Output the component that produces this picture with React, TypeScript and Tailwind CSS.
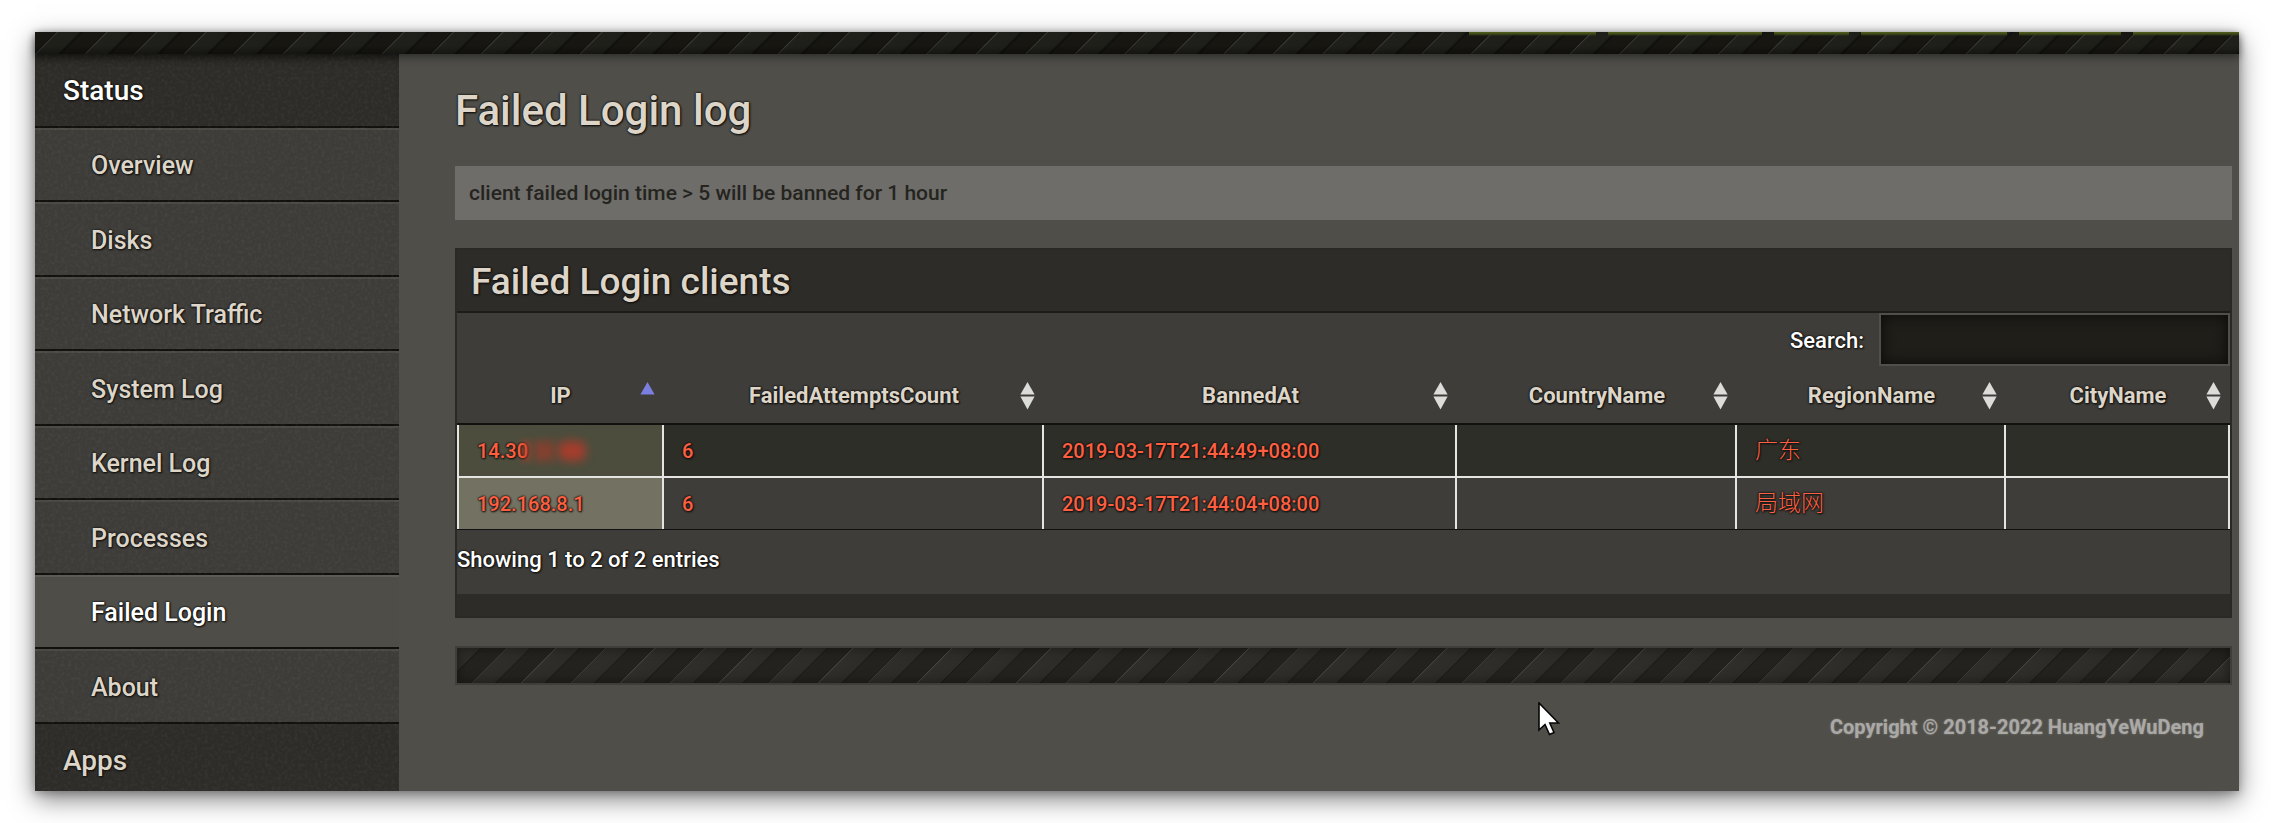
import { useState } from "react";

const overviewLinks = [
  "Overview",
  "Disks",
  "Network Traffic",
  "System Log",
  "Kernel Log",
  "Processes",
  "Failed Login",
  "About",
];

const columns = [
  { name: "IP", width: "w-[207px]" },
  { name: "FailedAttemptsCount", width: "w-[380px]" },
  { name: "BannedAt", width: "w-[413px]" },
  { name: "CountryName", width: "w-[280px]" },
  { name: "RegionName", width: "w-[269px]" },
  { name: "CityName", width: "w-[224px]" },
];

const clients = [
  { ip: "14.30", masked: true, count: 6, bannedAt: "2019-03-17T21:44:49+08:00", country: "", region: "广东", city: "" },
  { ip: "192.168.8.1", masked: false, count: 6, bannedAt: "2019-03-17T21:44:04+08:00", country: "", region: "局域网", city: "" },
];

const headerTabs = ["w-[127px]", "w-[154px]", "w-[75px]", "w-[146px]", "w-[102px]", "w-[106px]"];

const outline = "[text-shadow:0_0_2px_#12110f,0_0_2px_#12110f,1px_1px_2px_#12110f]";

function Grain() {
  return (
    <svg aria-hidden="true" className="pointer-events-none absolute inset-0 h-full w-full opacity-4">
      <filter id="grain">
        <feTurbulence type="fractalNoise" baseFrequency="0.3" numOctaves="3" seed="4" />
        <feColorMatrix type="matrix" values="0 0 0 0 1  0 0 0 0 1  0 0 0 0 0.95  2.4 0 0 0 -1" />
      </filter>
      <rect width="100%" height="100%" filter="url(#grain)" />
    </svg>
  );
}

function SortIcon({ active }: { active: boolean }) {
  return (
    <svg aria-hidden="true" width="15" height="28" viewBox="0 0 15 28">
      <path d="M7.5 0 L14.6 12.6 H0.4 Z" fill={active ? "#7b7fe0" : "#dcdcda"} />
      {!active && <path d="M7.5 27.5 L14.6 14.6 H0.4 Z" fill="#dcdcda" />}
    </svg>
  );
}

function Sidebar() {
  return (
    <nav className="relative w-[364px] shrink-0 bg-[#3d3c38]">
      <a
        href="#status"
        className={`flex h-[74px] items-center border-b-2 border-[#11100d] bg-[#2d2c28] pt-0.5 pl-7 text-[28px] font-medium text-white shadow-[inset_0_8px_8px_-6px_#1c1b18] ${outline}`}
      >
        Status
      </a>
      <ul>
        {overviewLinks.map((label) => {
          const current = label === "Failed Login";
          return (
            <li key={label} className="odd:h-[74px] even:h-[75px]">
              <a
                href={"#" + label.toLowerCase().replace(" ", "-")}
                aria-current={current ? "page" : undefined}
                className={`flex h-full items-center border-t-2 border-b-2 border-b-[#11100d] pt-0.5 pl-14 text-[25px] font-medium ${outline} ${
                  current
                    ? "relative z-10 border-t-[#5d5b56] bg-[#4e4d48] text-white"
                    : "border-t-[#4a4944] text-[#dcd5c8]"
                }`}
              >
                {label}
              </a>
            </li>
          );
        })}
      </ul>
      <a
        href="#apps"
        className={`flex h-[67px] items-center bg-[#2d2c28] pt-1.5 pl-7 text-[28px] font-medium text-[#dcd5c8] ${outline}`}
      >
        Apps
      </a>
      <Grain />
    </nav>
  );
}

export default function App() {
  const [query, setQuery] = useState("");
  const rows = clients.filter((c) => Object.values(c).join(" ").includes(query));

  return (
    <div className="min-h-screen bg-white pt-8 pr-8 pb-8 pl-[35px] font-['Roboto','Noto_Sans_CJK_SC',sans-serif]">
      <div className="relative bg-[#4f4e49] shadow-[0_8px_24px_rgba(0,0,0,0.5),0_2px_8px_rgba(0,0,0,0.25)]">
        <header className="relative z-10 flex h-[22px] justify-end gap-3 bg-[linear-gradient(to_bottom,transparent_60%,rgba(0,0,0,0.35)),repeating-linear-gradient(135deg,#171611_0px,#171611_14px,#12110e_15px,#3a3a34_16px,#20201b_17px,#1f1f1a_31px,#0f0f0c_33px,#171611_35px)] shadow-[0_3px_8px_rgba(0,0,0,0.45)]">
          {headerTabs.map((width) => (
            <div key={width} className={`h-1 bg-[linear-gradient(to_bottom,#52621c,#3c4718_50%,transparent)] ${width}`} />
          ))}
        </header>

        <div className="flex">
          <Sidebar />

          <main className="min-w-0 flex-1 pr-[7px] pl-14">
            <h1 className={`pt-[33px] text-[42px] leading-[48px] font-medium text-[#dcd5c8] ${outline}`}>
              Failed Login log
            </h1>

            <p className="mt-[31px] flex h-[54px] items-center bg-[#6e6d69] pt-0.5 pl-[14px] text-[21px] font-medium text-[#25241f]">
              client failed login time &gt; 5 will be banned for 1 hour
            </p>

            <section className="mt-7 border-2 border-[#2a2926] bg-[#3e3d39]">
              <h2
                className={`flex h-[63px] items-center border-b-2 border-[#1d1c19] bg-[#2e2c29] pt-0.5 pl-[14px] text-[37px] font-medium text-[#dcd5c8] ${outline}`}
              >
                Failed Login clients
              </h2>

              <div className="flex items-center justify-end gap-[15px]">
                <label htmlFor="search" className={`pt-0.5 text-[22px] font-medium text-white ${outline}`}>
                  Search:
                </label>
                <input
                  id="search"
                  type="text"
                  value={query}
                  onChange={(e) => setQuery(e.target.value)}
                  className="h-[53px] w-[351px] border-2 border-[#504f4a] bg-[#1f1e19] px-3 text-[22px] text-white shadow-[inset_0_0_14px_#0b0a08] outline-none"
                />
              </div>

              <table className="w-full table-fixed border-separate border-spacing-0">
                <thead>
                  <tr>
                    {columns.map((col, i) => (
                      <th key={col.name} scope="col" className={`h-[59px] border-b-2 border-[#11110f] p-0 ${col.width}`}>
                        <button
                          type="button"
                          className={`grid w-full grid-cols-[15px_1fr_15px] items-center px-[9px] pt-0.5 text-[22px] font-bold text-[#dcd5c8] ${outline}`}
                        >
                          <span className="col-start-2">{col.name}</span>
                          <SortIcon active={i === 0} />
                        </button>
                      </th>
                    ))}
                  </tr>
                </thead>
                <tbody className={`text-[20px] font-medium text-[#ff5f41] ${outline}`}>
                  {rows.map((c) => (
                    <tr
                      key={c.bannedAt}
                      className="odd:bg-[#2e2e29] [&>td]:h-[51px] [&>td]:border-r-2 [&>td]:border-[#e4e4e2] [&>td]:py-0 [&>td]:pl-[18px] [&>td:first-child]:border-l-2 [&:not(:last-child)>td]:h-[53px] [&:not(:last-child)>td]:border-b-2 odd:[&>td:first-child]:bg-[#4c4d3d] even:[&>td:first-child]:bg-[#737161]"
                    >
                      <td>
                        <div className="flex items-center">
                          {c.ip}
                          {c.masked && (
                            <span aria-hidden="true" className="-ml-1.5 flex items-center gap-1">
                              <span className="h-5 w-2 bg-[#b8402c]/70 blur-[3px]" />
                              <span className="h-5 w-5 bg-[#84402f] blur-[4px]" />
                              <span className="h-5 w-7 rounded-lg bg-[#a43d2c] blur-[5px]" />
                            </span>
                          )}
                        </div>
                      </td>
                      <td>{c.count}</td>
                      <td>{c.bannedAt}</td>
                      <td>{c.country}</td>
                      <td className="text-[23px] leading-8 font-light">{c.region}</td>
                      <td>{c.city}</td>
                    </tr>
                  ))}
                </tbody>
              </table>

              <p className={`h-[65px] border-t border-[#11110f] pt-[14px] text-[22px] leading-8 font-medium text-white ${outline}`}>
                Showing 1 to 2 of 2 entries
              </p>
              <div className="h-[22px] bg-[#2e2c29]" />
            </section>

            <div className="mt-7 h-[39px] border-2 border-[#3f3e3a] bg-[repeating-linear-gradient(135deg,#45443f_0px,#302e2a_1px,#2e2c28_16px,#1c1b18_17px,#24221e_18px,#24221e_34px,#21201c_35px)] shadow-[inset_0_0_12px_rgba(0,0,0,0.45)]" />

            <footer className="pt-[26px] pr-7 text-right text-[20px] leading-8 font-bold text-[#aaa9a6] [text-shadow:0_0_2px_#8a8985]">
              Copyright © 2018-2022 HuangYeWuDeng
            </footer>
          </main>
        </div>

        <svg
          aria-hidden="true"
          className="absolute top-[670px] left-[1503px]"
          width="22"
          height="34"
          viewBox="0 0 22 34"
        >
          <path
            d="M1 1 V28 L7 22.5 L11.5 32.5 L16 30.5 L11.8 21 H20.5 Z"
            fill="#fff"
            stroke="#050505"
            strokeWidth="1.6"
          />
        </svg>
      </div>
    </div>
  );
}
